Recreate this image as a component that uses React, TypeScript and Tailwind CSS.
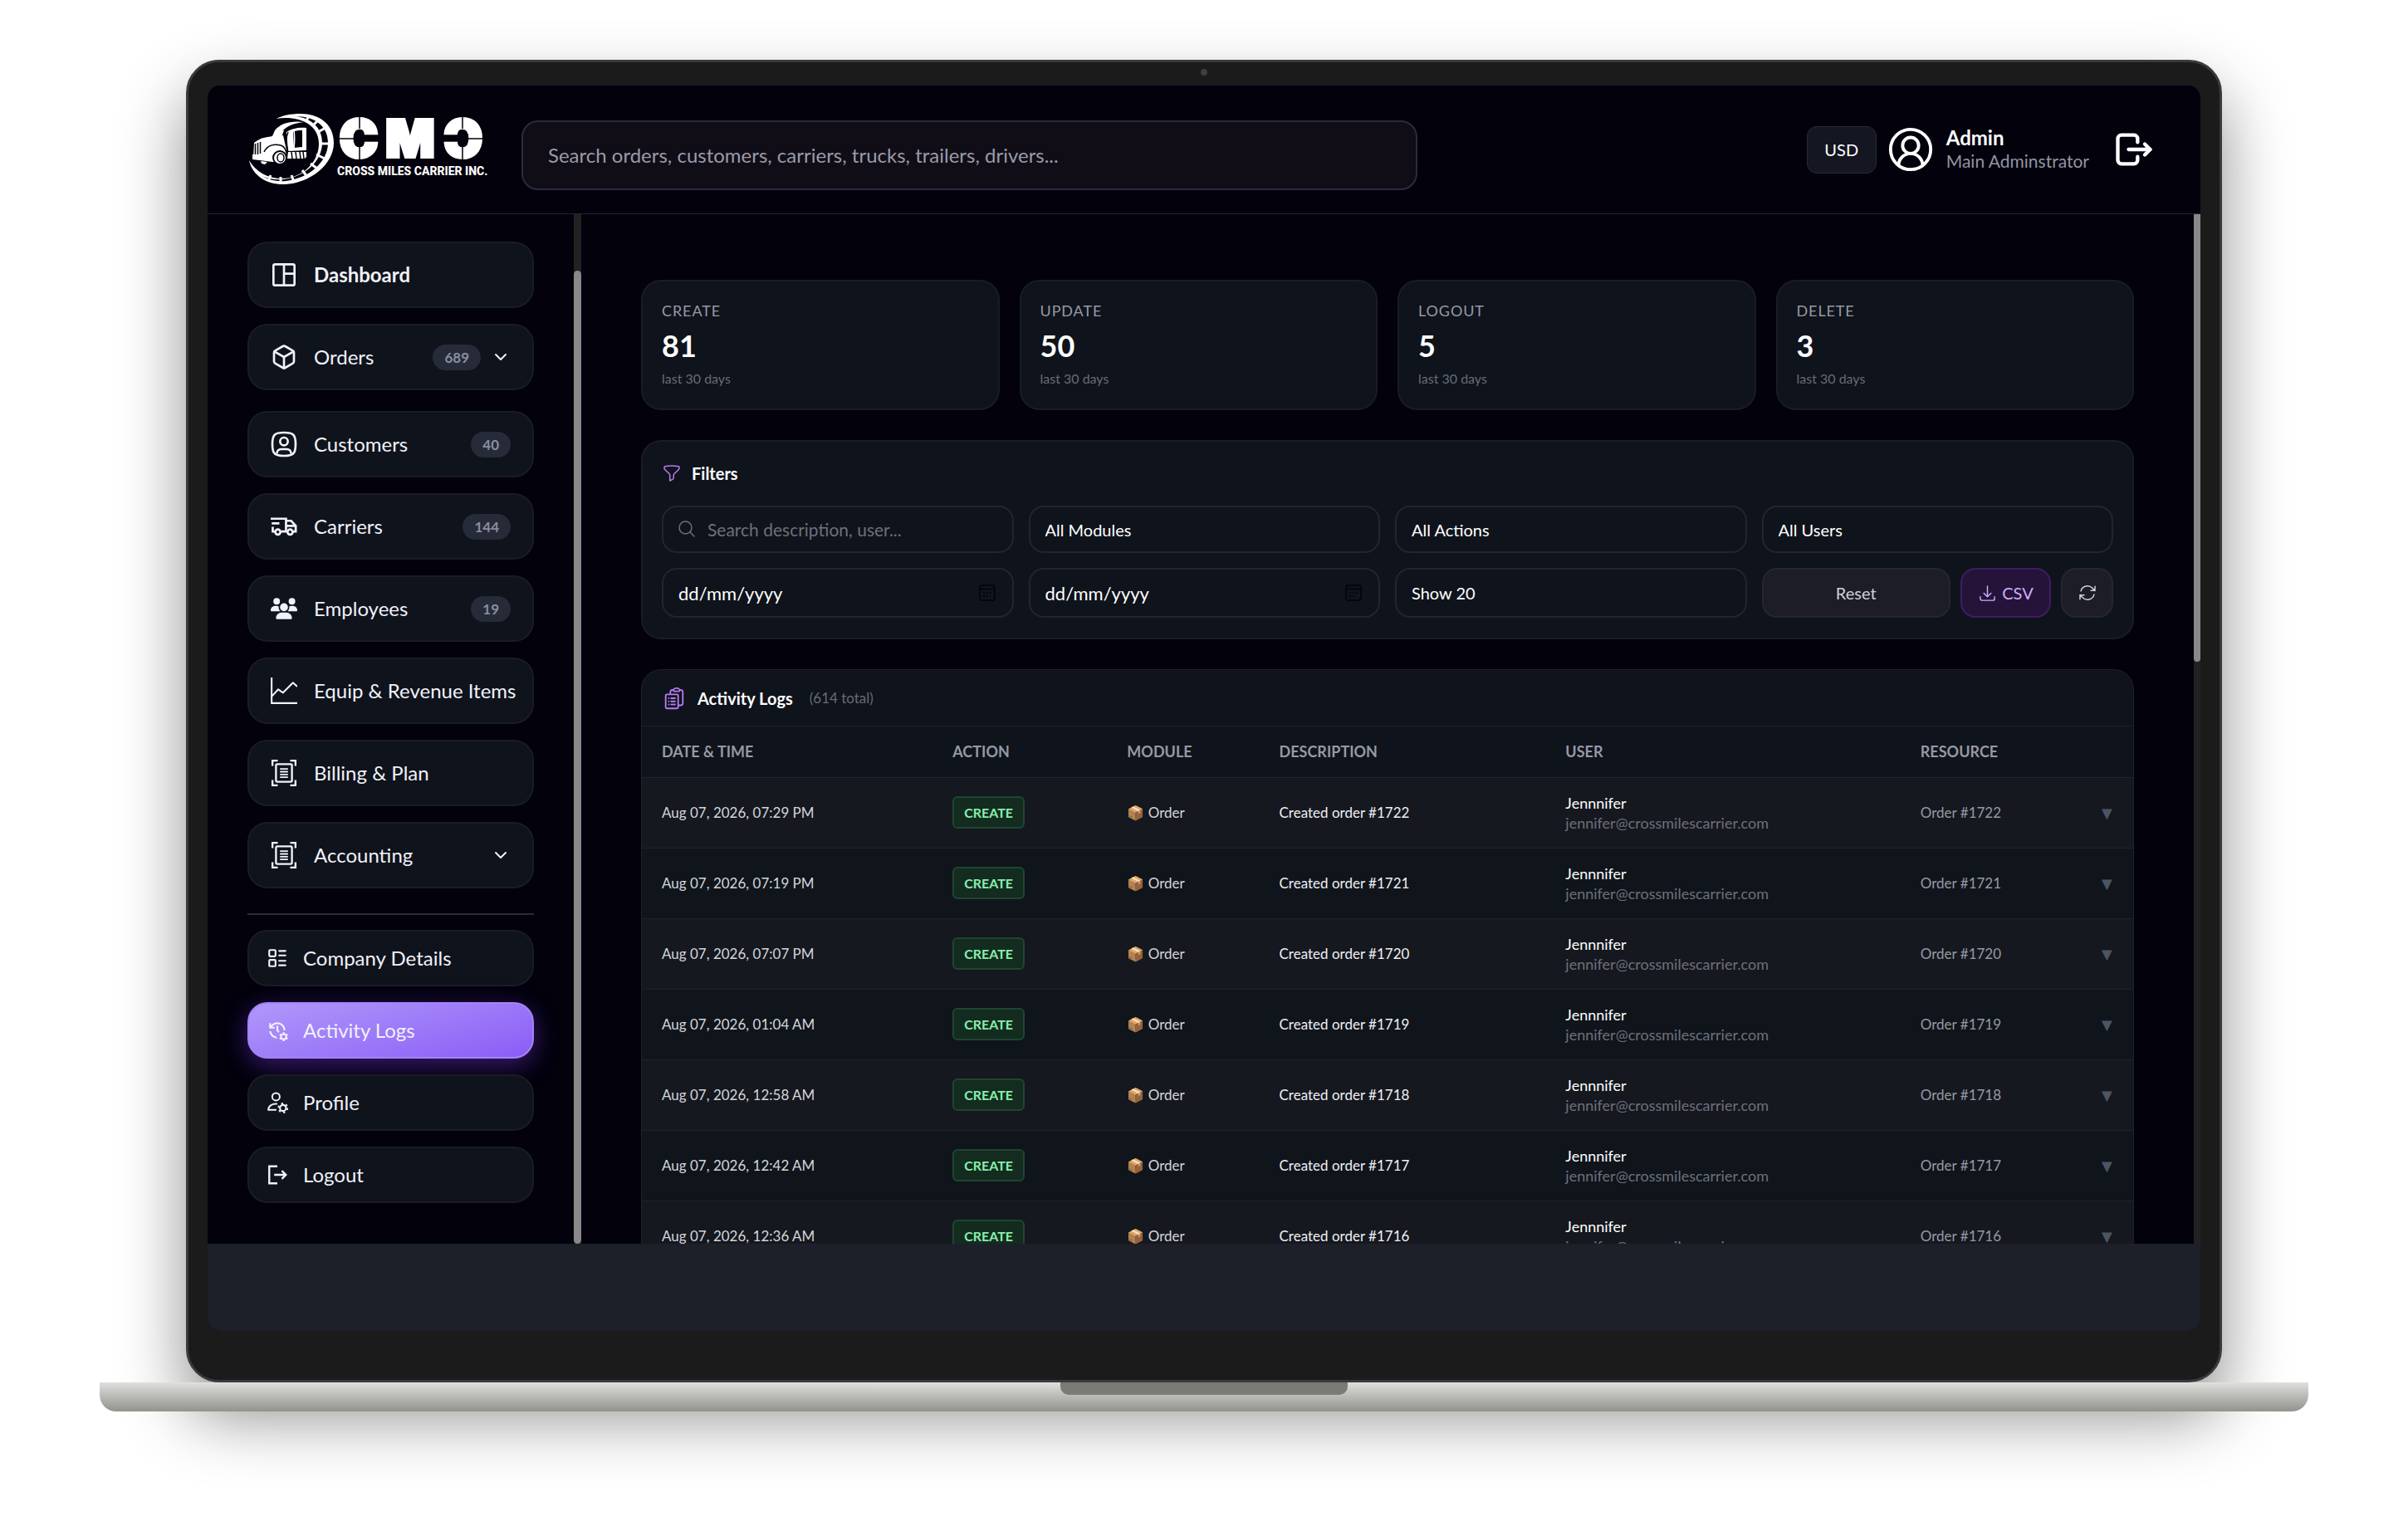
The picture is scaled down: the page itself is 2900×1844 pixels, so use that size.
import React from "react";
import { Box, ChevronDown, CircleUserRound, LayoutList } from "lucide-react";
import { FaUsers } from "react-icons/fa6";
import {
  HiOutlineArrowDownTray,
  HiOutlineArrowPath,
  HiOutlineClipboardDocumentList,
  HiOutlineFunnel,
  HiOutlineMagnifyingGlass,
} from "react-icons/hi2";
import { MdManageHistory } from "react-icons/md";
import { TbLogout } from "react-icons/tb";

type IconProps = { className?: string };

const DashboardIcon = ({ className }: IconProps) => (
  <svg viewBox="0 0 24 24" fill="none" stroke="currentColor" strokeWidth="2" className={className}>
    <rect x="2.5" y="2.5" width="19" height="19" rx="1.5" />
    <path d="M12 2.5v19M12 11h9.500" />
  </svg>
);

const CustomersIcon = ({ className }: IconProps) => (
  <svg viewBox="0 0 24 24" fill="none" stroke="currentColor" strokeWidth="2" className={className}>
    <path d="M12 1.500c8.500 0 10.500 2 10.500 10.500s-2 10.500-10.500 10.500S1.500 20.500 1.500 12 3.500 1.500 12 1.500z" />
    <circle cx="12" cy="9.500" r="3.500" />
    <path d="M5.500 20.500c.3-3 2-4 4-4h5c2 0 3.700 1 4 4" />
  </svg>
);

const CarriersIcon = ({ className }: IconProps) => (
  <svg viewBox="0 0 26 20" fill="none" stroke="currentColor" strokeWidth="2.200" className={className}>
    <path d="M0 2.500h15V15M1 7h7.500M2 10.500V15h2M10 15h6M15 4.500h5l4.500 5V15H22M15 9.500h9.500" />
    <circle cx="7" cy="15.500" r="2.500" />
    <circle cx="19" cy="15.500" r="2.500" />
  </svg>
);

const RevenueIcon = ({ className }: IconProps) => (
  <svg viewBox="0 0 28 28" fill="none" stroke="currentColor" strokeWidth="1.8" className={className}>
    <path d="M1 0v27h27" />
    <path d="M1 20l7-7.500 5 3.500 10.500-10.500 4.500 4" strokeLinejoin="round" />
  </svg>
);

const BillingIcon = ({ className }: IconProps) => (
  <svg viewBox="0 0 28 30" fill="none" stroke="currentColor" strokeWidth="2.200" className={className}>
    <path d="M1 7V1h6M21 1h6v6M27 23v6h-6M7 29H1v-6" />
    <rect x="5" y="5" width="18" height="20" rx="1.500" />
    <path d="M9.500 10.500h9M9.500 13.600h9M9.500 16.700h9M9.500 19.800h9" strokeWidth="1.700" />
  </svg>
);

const ProfileIcon = ({ className }: IconProps) => (
  <svg viewBox="0 0 24 24" fill="none" stroke="currentColor" strokeWidth="1.800" className={className}>
    <circle cx="10.500" cy="5.500" r="4.200" />
    <path d="M12 13.500c-5.500-.5-10 2-10 6.500h9" />
    <circle cx="18.300" cy="18" r="3.400" strokeWidth="2" />
    <circle cx="18.300" cy="18" r="5" strokeWidth="1.800" strokeDasharray="2.200 3.036" />
  </svg>
);

const SignOutIcon = ({ className }: IconProps) => (
  <svg viewBox="0 0 24 24" fill="none" stroke="currentColor" strokeWidth="2.200" className={className}>
    <path d="M12 2.500H3v19h9" />
    <path d="M8.500 12h13M17 7.500l4.500 4.500-4.500 4.500" />
  </svg>
);

const CalendarIcon = ({ className }: IconProps) => (
  <svg viewBox="0 0 20 20" fill="none" stroke="currentColor" strokeWidth="1.800" className={className}>
    <rect x="1" y="1" width="18" height="18" rx="2.500" />
    <path d="M1 5.500h18" />
    <path d="M5 10h2M9 10h2M13 10h2M5 14h2M9 14h2" strokeWidth="2" />
  </svg>
);

const Logo = () => (
  <svg viewBox="0 0 286 86" className="w-[286px] shrink-0 overflow-visible" role="img" aria-label="Cross Miles Carrier Inc.">
    {/* tyre */}
    <path
      d="M33 6C55 2 84 10 84 36c0 24-22 42-44 42C22 78 8 70 0 56c4 20 24 30 43 29 29-1 59-23 59-50C102 12 84 0 62 0 50 0 40 2 33 6z"
      fill="#fff"
    />
    <path
      d="M56 3c22 0 39 11 39 32 0 23-23 43-51 46-10 1-20-1-28-6 8 4 17 5 26 4 24-3 46-21 46-44C88 16 74 5 56 3z"
      fill="#02010c"
    />
    <path
      d="M69 8l3-5M78 13l6-6M83 22l9-5M85 36h11M81 49l10 5M74 60l8 6M64 68l6 8M51 74l3 8M38 76v7M26 74l-3 7"
      stroke="#fff"
      strokeWidth="3"
    />
    {/* cab */}
    <path d="M31 20c7-9 20-12 35-10-10 1-19 4-24 9l-7 6-7 2z" fill="#fff" />
    <path d="M26 29c4-5 9-8 16-9l-3 8-13 3z" fill="#fff" />
    <path d="M45 22c6-4 14-6 24-5v27l-22 1z" fill="#fff" />
    <path d="M53 22c4-2 7-2 11-2v20l-10 1z" fill="#02010c" />
    <path d="M54 20c1 7 1 13 0 22" stroke="#fff" strokeWidth="1.500" fill="none" />
    <path d="M47 22c-3 7-3 15 0 24" stroke="#02010c" strokeWidth="1.500" fill="none" />
    <path d="M6 35c8-7 20-8 35-9l4 18-2 14H28L5 55z" fill="#fff" />
    <path d="M7.500 36v13M10.500 35v14M13.500 34v14" stroke="#02010c" strokeWidth="1.500" />
    <path d="M18 46c4-8 12-10 20-8 4 1 6 5 7 9" stroke="#02010c" strokeWidth="1.500" fill="none" />
    <circle cx="37" cy="53" r="8" fill="#fff" stroke="#02010c" strokeWidth="2" />
    <ellipse cx="38" cy="53" rx="4" ry="5" fill="none" stroke="#02010c" strokeWidth="1.500" />
    <path d="M4 49l22 1v6l-22-1zM14 57l8 1-3 3-4-1z" fill="#fff" />
    <path d="M47 46h22v6l-2 2H46z" fill="#fff" />
    <path d="M51 46l1 8M56 46l1 8M61 46l1 8M65 46l1 8" stroke="#02010c" strokeWidth="1.500" />
    {/* word mark with stencil cuts */}
    <g
      fontSize="62"
      fontWeight="900"
      fill="#fff"
      stroke="#fff"
      strokeWidth="4"
      fontFamily="Inter, sans-serif"
      textAnchor="middle"
    >
      <text x="132" y="52">C</text>
      <text x="194" y="52">M</text>
      <text x="258" y="52">Ɔ</text>
    </g>
    <path d="M104 30h22M264 30h24M133 4v14M133 40v16M257 4v14M257 40v16" stroke="#02010c" strokeWidth="1.500" />
    <text
      x="106"
      y="74"
      fontSize="14"
      fontWeight="800"
      fill="#fff"
      fontFamily="Roboto, sans-serif"
    >
      CROSS MILES CARRIER INC.
    </text>
  </svg>
);

const mainLinks = [
  { label: "Dashboard", icon: DashboardIcon, bold: true },
  { label: "Orders", icon: Box, count: 689, expandable: true },
  { label: "Customers", icon: CustomersIcon, count: 40 },
  { label: "Carriers", icon: CarriersIcon, count: 144 },
  { label: "Employees", icon: FaUsers, count: 19 },
  { label: "Equip & Revenue Items", icon: RevenueIcon },
  { label: "Billing & Plan", icon: BillingIcon },
  { label: "Accounting", icon: BillingIcon, expandable: true },
];

const accountLinks = [
  { label: "Company Details", icon: LayoutList },
  { label: "Activity Logs", icon: MdManageHistory, active: true },
  { label: "Profile", icon: ProfileIcon },
  { label: "Logout", icon: SignOutIcon },
];

const stats = [
  { label: "CREATE", value: 81 },
  { label: "UPDATE", value: 50 },
  { label: "LOGOUT", value: 5 },
  { label: "DELETE", value: 3 },
];

const logs = [
  { time: "Aug 07, 2026, 07:29 PM", order: 1722 },
  { time: "Aug 07, 2026, 07:19 PM", order: 1721 },
  { time: "Aug 07, 2026, 07:07 PM", order: 1720 },
  { time: "Aug 07, 2026, 01:04 AM", order: 1719 },
  { time: "Aug 07, 2026, 12:58 AM", order: 1718 },
  { time: "Aug 07, 2026, 12:42 AM", order: 1717 },
  { time: "Aug 07, 2026, 12:36 AM", order: 1716 },
];

const Header = () => (
  <header className="flex h-[155px] shrink-0 items-center border-b border-[#242333] pr-[54px] pl-[50px]">
    <Logo />
    <input
      type="search"
      aria-label="Search"
      placeholder="Search orders, customers, carriers, trucks, trailers, drivers..."
      className="ml-[42px] mt-[14px] h-[84px] w-[47%] rounded-[20px] border-2 border-[#2c2b3d] bg-[#100d17] px-[30px] pb-[2px] text-[24px] text-white placeholder:text-[#9a9ba8]"
    />
    <div className="ml-auto flex items-center">
      <button className="h-[57px] w-[84px] rounded-xl border border-[#292a38] bg-[#141622] text-[20px] text-white">
        USD
      </button>
      <CircleUserRound className="ml-[12px] size-[58px] text-white" strokeWidth={1.6} />
      <div className="ml-[14px]">
        <div className="text-[24px] leading-[28px] font-bold text-white">Admin</div>
        <div className="text-[21px] leading-[28px] text-[#9294a3]">Main Adminstrator</div>
      </div>
      <button aria-label="Log out" className="ml-[28px] text-white">
        <TbLogout className="size-[52px]" />
      </button>
    </div>
  </header>
);

const Sidebar = () => (
  <aside className="flex w-[450px] shrink-0 overflow-hidden">
    <nav className="min-w-0 flex-1 px-[48px] pt-[33px] text-[24px] text-[#f1f1fa]">
      <div className="flex flex-col gap-[19px]">
        {mainLinks.map(({ label, icon: Icon, count, expandable, bold }) => (
          <a
            key={label}
            href="#"
            className={`flex h-[80px] items-center rounded-[24px] border-2 border-[#1a1c24] bg-[#0f131b] px-[26px] ${
              label === "Orders" ? "mb-[6px]" : ""
            } ${bold ? "font-bold" : ""}`}
          >
            <Icon className="size-[32px] shrink-0" />
            <span className="ml-[20px] whitespace-nowrap">{label}</span>
            {count && (
              <span className="ml-auto rounded-full bg-[#272b39] px-[14px] text-[17px] leading-[31px] font-bold text-[#8a8e9e]">
                {count}
              </span>
            )}
            {expandable && <ChevronDown className={`size-[24px] ${count ? "ml-[12px]" : "ml-auto"}`} />}
          </a>
        ))}
      </div>
      <hr className="mt-[30px] mb-[18px] border-t-2 border-[#2b2d3a]" />
      <div className="flex flex-col gap-[19px]">
        {accountLinks.map(({ label, icon: Icon, active }) => (
          <a
            key={label}
            href="#"
            className={`flex h-[68px] items-center rounded-[24px] border-2 px-[21px] ${
              active
                ? "border-[#a483f8] bg-linear-165 from-[#b197fa] to-[#8b5cf6] shadow-[0_8px_30px_rgba(124,58,237,0.45)]"
                : "border-[#1a1c24] bg-[#0f131b]"
            }`}
          >
            <Icon className="size-[26px] shrink-0" />
            <span className="ml-[18px] whitespace-nowrap">{label}</span>
          </a>
        ))}
      </div>
    </nav>
    <div className="flex w-[9px] flex-col justify-end bg-[#222222]">
      <div className="h-[94.5%] rounded-full bg-[#888888]" />
    </div>
  </aside>
);

const StatCards = () => (
  <section className="grid grid-cols-4 gap-[24px]">
    {stats.map((s) => (
      <div key={s.label} className="rounded-[24px] border-2 border-[#1a1c24] bg-[#0f131b] px-[23px] pt-[21px] pb-[24px]">
        <div className="text-[18px] leading-[28px] tracking-wider text-[#9699a5]">{s.label}</div>
        <div className="text-[36px] leading-[56px] font-bold text-white">{s.value}</div>
        <div className="text-[16px] leading-[24px] text-[#686b78]">last 30 days</div>
      </div>
    ))}
  </section>
);

const fieldClass =
  "w-full appearance-none rounded-[18px] border-2 border-[#23252d] bg-[#0f131b] px-[18px] text-white placeholder:text-white";

const FilterSelect = ({ label, height }: { label: string; height: string }) => (
  <select aria-label={label} className={`${fieldClass} ${height} text-[20px]`}>
    <option>{label}</option>
  </select>
);

const DateField = ({ label }: { label: string }) => (
  <div className="relative">
    <input type="text" aria-label={label} placeholder="dd/mm/yyyy" className={`${fieldClass} h-[60px] text-[22px]`} />
    <CalendarIcon className="absolute top-[20px] right-[22px] size-[20px] text-[#05060a]" />
  </div>
);

const Filters = () => (
  <section className="mt-[36px] rounded-[24px] border-2 border-[#1a1c24] bg-[#0f131b] px-[23px] pt-[23px] pb-[24px]">
    <h2 className="flex items-center text-[20px] leading-[30px] font-bold text-white">
      <HiOutlineFunnel className="mr-[12px] size-[24px] text-[#b57bf0]" />
      Filters
    </h2>
    <div className="mt-[24px] grid grid-cols-4 gap-x-[18px] gap-y-[18px]">
      <div className="relative">
        <HiOutlineMagnifyingGlass className="absolute top-[16px] left-[18px] size-[24px] text-[#6d707c]" />
        <input
          type="text"
          aria-label="Search description or user"
          placeholder="Search description, user..."
          className="h-[57px] w-full rounded-[18px] border-2 border-[#23252d] bg-[#0f131b] pl-[53px] text-[21px] text-white placeholder:text-[#6d707c]"
        />
      </div>
      <FilterSelect label="All Modules" height="h-[57px]" />
      <FilterSelect label="All Actions" height="h-[57px]" />
      <FilterSelect label="All Users" height="h-[57px]" />
      <DateField label="From date" />
      <DateField label="To date" />
      <FilterSelect label="Show 20" height="h-[60px]" />
      <div className="flex gap-[12px] text-[20px]">
        <button className="flex-1 rounded-[18px] border-2 border-[#25262f] bg-[#1c1d27] text-[#cfd1da]">Reset</button>
        <button className="flex w-[109px] items-center justify-center gap-[6px] rounded-[18px] border-2 border-[#3e1d63] bg-[#25133a] text-[#d3adf9]">
          <HiOutlineArrowDownTray className="size-[23px]" />
          CSV
        </button>
        <button
          aria-label="Refresh"
          className="flex w-[63px] items-center justify-center rounded-[18px] border-2 border-[#25262f] bg-[#1c1d27] text-[#cfd1da]"
        >
          <HiOutlineArrowPath className="size-[24px]" />
        </button>
      </div>
    </div>
  </section>
);

const LogTable = () => (
  <section className="mt-[36px] overflow-hidden rounded-t-[24px] border border-[#1f2129] bg-[#0f131b]">
    <h2 className="flex h-[68px] items-center border-b border-[#1e2028] px-[24px] text-[20px] font-bold text-white">
      <HiOutlineClipboardDocumentList className="mr-[13px] size-[30px] text-[#b57bf0]" />
      Activity Logs
      <span className="ml-[20px] text-[17px] font-normal text-[#686b78]">(614 total)</span>
    </h2>
    <table className="w-full table-fixed text-left text-[17px]">
      <colgroup>
        <col className="w-[19.5%]" />
        <col className="w-[11.7%]" />
        <col className="w-[10.2%]" />
        <col className="w-[19.2%]" />
        <col className="w-[23.8%]" />
        <col className="w-[11.9%]" />
        <col className="w-[3.7%]" />
      </colgroup>
      <thead>
        <tr className="h-[61px] text-[18px] text-[#9699a5] *:px-[24px] *:font-bold">
          <th>DATE &amp; TIME</th>
          <th>ACTION</th>
          <th>MODULE</th>
          <th>DESCRIPTION</th>
          <th>USER</th>
          <th>RESOURCE</th>
          <th aria-label="Expand" />
        </tr>
      </thead>
      <tbody>
        {logs.map((log) => (
          <tr
            key={log.order}
            className="h-[85px] border-t border-[#20232a] bg-[#10151b] whitespace-nowrap odd:bg-[#15181e] *:px-[24px]"
          >
            <td className="text-[#d3d5dc]">{log.time}</td>
            <td>
              <span className="inline-block rounded-md border-2 border-[#1d4630] bg-[#142b20] px-[12px] text-[16px] leading-[35px] font-bold text-[#86efac]">
                CREATE
              </span>
            </td>
            <td className="text-[#d3d5dc]">📦 Order</td>
            <td className="text-[#eeeff4]">Created order #{log.order}</td>
            <td className="text-[18px] leading-[24px]">
              <div className="text-white">Jennnifer</div>
              <div className="text-[#6d707c]">jennifer@crossmilescarrier.com</div>
            </td>
            <td className="text-[#9699a5]">Order #{log.order}</td>
            <td>
              <button aria-label={`Expand order ${log.order}`} className="text-[22px] text-[#4b5563]">
                ▼
              </button>
            </td>
          </tr>
        ))}
      </tbody>
    </table>
  </section>
);

export default function App() {
  return (
    <div className="overflow-hidden bg-white px-[120px] pt-[72px] pb-[144px] font-['Lato',sans-serif]">
      <div className="relative mx-[104px] rounded-[40px] border-[3px] border-[#3a3a3c] bg-[#1b1b1c] px-[23px] pt-[28px] pb-[59px] shadow-[0_40px_80px_rgba(0,0,0,0.45)]">
        <div className="absolute top-[8px] left-1/2 size-[8px] -translate-x-1/2 rounded-full bg-[#3f3f42]" />
        <div className="flex aspect-[16/10] flex-col overflow-hidden rounded-[15px] bg-[#02010c]">
          <Header />
          <div className="flex min-h-0 flex-1">
            <Sidebar />
            <main className="min-w-0 flex-1 overflow-hidden px-[72px] pt-[79px]">
              <StatCards />
              <Filters />
              <LogTable />
            </main>
            <div className="w-[8px] bg-[#222222]">
              <div className="h-[43.5%] rounded-b-full bg-[#888888]" />
            </div>
          </div>
          <div className="h-[7%] shrink-0 bg-[#1d2029]" />
        </div>
      </div>
      <div className="relative h-[35px] rounded-b-[20px] bg-linear-to-b from-[#e0e0df] via-[#b8b9b4] to-[#92938c]">
        <div className="mx-auto h-[15px] w-[13%] rounded-b-[10px] bg-[#7a7b75]" />
      </div>
    </div>
  );
}
